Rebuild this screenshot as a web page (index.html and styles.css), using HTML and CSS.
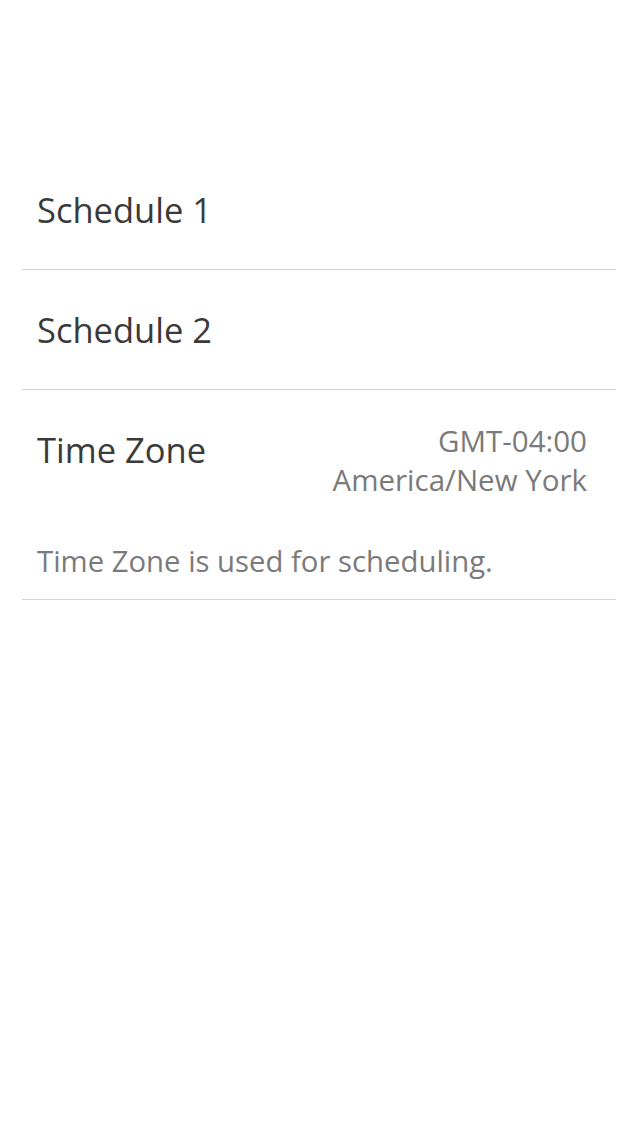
FILE: index.html
```html
<!DOCTYPE html>
<html>
<head>
<meta charset="utf-8">
<link rel="stylesheet" href="styles.css">
</head>
<body>
<div class="list">
  <div class="row"><span class="title">Schedule 1</span></div>
  <div class="row"><span class="title">Schedule 2</span></div>
  <div class="row tz">
    <div class="tz-top">
      <span class="title">Time Zone</span>
      <div class="value"><div>GMT-04:00</div><div>America/New York</div></div>
    </div>
    <div class="note">Time Zone is used for scheduling.</div>
  </div>
</div>
</body>
</html>
```
FILE: styles.css
```css
html, body { margin: 0; padding: 0; background: #fff; }
body { width: 640px; height: 1136px; font-family: "Open Sans", "Noto Sans", sans-serif; }
.list { padding-top: 150px; margin: 0 24px 0 22px; }
.row { height: 119px; border-bottom: 1px solid #d4d4d4; display: flex; align-items: center; padding: 0 29px 0 15px; }
.title { font-size: 34.5px; color: #3a3a3a; line-height: 44px; }
.tz { height: auto; display: block; padding-top: 31px; padding-bottom: 18px; }
.tz-top { display: flex; justify-content: space-between; align-items: flex-start; }
.tz-top .title { margin-top: 7px; }
.value { text-align: right; font-size: 29.5px; color: #7a7a7a; line-height: 39px; }
.note { font-size: 29.3px; color: #7a7a7a; margin-top: 42px; line-height: 40px; }
```
